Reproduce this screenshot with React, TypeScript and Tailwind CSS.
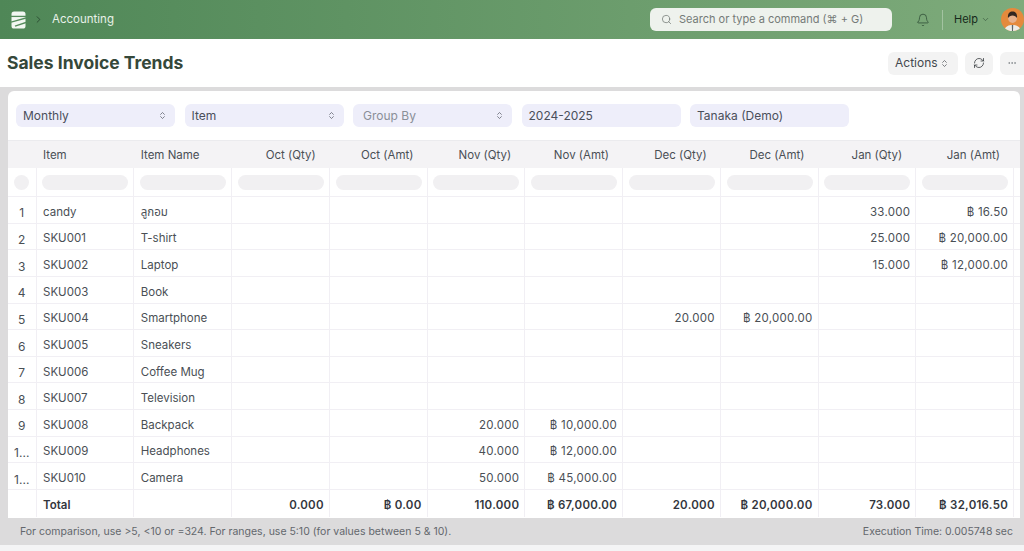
import type { ReactNode } from 'react';
import { Search, Bell, ChevronDown, ChevronRight, ChevronsUpDown, RefreshCw, Ellipsis } from 'lucide-react';

const COLUMNS = ['Oct (Qty)', 'Oct (Amt)', 'Nov (Qty)', 'Nov (Amt)', 'Dec (Qty)', 'Dec (Amt)', 'Jan (Qty)', 'Jan (Amt)'];

const ROWS: { index: string; item: string; name: string; values: Record<number, string> }[] = [
  { index: '1', item: 'candy', name: 'ลูกอม', values: { 6: '33.000', 7: '฿ 16.50' } },
  { index: '2', item: 'SKU001', name: 'T-shirt', values: { 6: '25.000', 7: '฿ 20,000.00' } },
  { index: '3', item: 'SKU002', name: 'Laptop', values: { 6: '15.000', 7: '฿ 12,000.00' } },
  { index: '4', item: 'SKU003', name: 'Book', values: {} },
  { index: '5', item: 'SKU004', name: 'Smartphone', values: { 4: '20.000', 5: '฿ 20,000.00' } },
  { index: '6', item: 'SKU005', name: 'Sneakers', values: {} },
  { index: '7', item: 'SKU006', name: 'Coffee Mug', values: {} },
  { index: '8', item: 'SKU007', name: 'Television', values: {} },
  { index: '9', item: 'SKU008', name: 'Backpack', values: { 2: '20.000', 3: '฿ 10,000.00' } },
  { index: '1...', item: 'SKU009', name: 'Headphones', values: { 2: '40.000', 3: '฿ 12,000.00' } },
  { index: '1...', item: 'SKU010', name: 'Camera', values: { 2: '50.000', 3: '฿ 45,000.00' } },
];

const TOTALS = ['0.000', '฿ 0.00', '110.000', '฿ 67,000.00', '20.000', '฿ 20,000.00', '73.000', '฿ 32,016.50'];

function Logo() {
  return (
    <svg width="15" height="18" viewBox="0 0 15 18" fill="none">
      <rect x="0.5" y="0.5" width="14" height="17" rx="2.6" fill="#f2f7f2" />
      <path d="M0 5.4H15" stroke="#558c5c" strokeWidth="1.3" />
      <path d="M0 11.2L15 7" stroke="#558c5c" strokeWidth="1.4" />
      <path d="M4 15.2L15 11.4" stroke="#558c5c" strokeWidth="1.4" />
    </svg>
  );
}

function Avatar() {
  return (
    <svg width="23" height="23" viewBox="0 0 23 23" className="rounded-full">
      <rect width="23" height="23" fill="#e58a3c" />
      <path d="M3 23C4 18 8 17 11.5 17C15 17 19 18 20 23Z" fill="#ecebe6" />
      <circle cx="11.5" cy="10.5" r="4.4" fill="#e6b08c" />
      <path d="M7 10C6.4 5 9 3.4 11.5 3.4C14 3.4 16.6 5 16 10C15 8.2 13.5 7.4 11.5 7.4C9.5 7.4 8 8.2 7 10Z" fill="#33261f" />
      <path d="M10.8 17H12.2L12 23H11Z" fill="#5d6468" />
    </svg>
  );
}

function SelectField({ label, chevron, muted }: { label: string; chevron?: boolean; muted?: boolean }) {
  return (
    <div className={`flex h-[23px] w-[159px] items-center justify-between rounded-md bg-[#eeeefa] pr-[8px] text-[12px] ${muted ? 'pl-[10px] text-[#8a8f98]' : 'pl-[7px] text-[#4a4f5a]'}`}>
      <span>{label}</span>
      {chevron && <ChevronsUpDown size={9} strokeWidth={1.8} className="text-[#4a4f5a]" />}
    </div>
  );
}

function Cell({ right, bold, children }: { right?: boolean; bold?: boolean; children?: ReactNode }) {
  return (
    <div className={`flex h-full w-[97.75px] shrink-0 items-center border-r border-[#f1eff4] pt-[5px] text-[11.5px] ${right ? 'justify-end px-[5px] tracking-[0.25px]' : 'pl-[6.5px]'} ${bold ? 'font-semibold text-[#33363d]' : 'text-[#4a4f55]'}`}>
      {children}
    </div>
  );
}

export default function App() {
  return (
    <div className="flex h-[551px] w-[1024px] flex-col overflow-hidden bg-[#dcdbdc] font-['Inter','Noto_Sans_Thai','Noto_Sans',sans-serif]">
      {/* Navbar */}
      <header className="flex h-[39px] shrink-0 items-center bg-gradient-to-r from-[#4f8757] to-[#7eab7b] pl-[11px]">
        <Logo />
        <ChevronRight size={11} strokeWidth={1.6} className="ml-[7px] text-[#1f3a26]" />
        <span className="ml-[8px] text-[11.5px] text-[#e8f1e8]">Accounting</span>
        <div className="ml-auto flex h-[23px] w-[242px] items-center rounded-md bg-[#eef2ed] pl-[11px] text-[#6f7672]">
          <Search size={11} strokeWidth={1.6} />
          <span className="ml-[7px] text-[11px] text-[#757b78]">Search or type a command (⌘ + G)</span>
        </div>
        <Bell size={14} strokeWidth={1.3} className="ml-[24px] text-[#2c4a34]" />
        <div className="ml-[12px] h-[20px] w-px bg-[#a3c3a1]" />
        <span className="ml-[11px] text-[11px] text-[#16291b]">Help</span>
        <ChevronDown size={9} strokeWidth={1.5} className="ml-[3px] text-[#2c4a34]" />
        <div className="ml-[11px] flex">
          <Avatar />
        </div>
      </header>

      {/* Page head */}
      <div className="flex h-[48px] shrink-0 items-center justify-between bg-white pl-[7px]">
        <h1 className="pt-[1px] text-[17.5px] font-bold text-[#35483a]">Sales Invoice Trends</h1>
        <div className="flex items-center gap-[7px]">
          <div className="flex h-[23px] w-[70px] items-center justify-between rounded-md bg-[#f3f3f3] pl-[7px] pr-[9px] text-[12px] text-[#44484e]">
            Actions
            <ChevronsUpDown size={9} strokeWidth={1.8} />
          </div>
          <div className="flex h-[23px] w-[28px] items-center justify-center rounded-md bg-[#f3f3f3] text-[#2f3337]">
            <RefreshCw size={12} strokeWidth={1.5} />
          </div>
          <div className="flex h-[23px] w-[24px] items-center justify-center rounded-l-md bg-[#f3f3f3] text-[#70757a]">
            <Ellipsis size={10} strokeWidth={1.6} />
          </div>
        </div>
      </div>

      {/* Report card */}
      <main className="flex flex-1 flex-col pl-[8px] pr-[4px] pt-[4px]">
        <div className="flex h-[427px] flex-col overflow-hidden rounded-t-md bg-white">
          <div className="flex h-[49px] shrink-0 items-center gap-[9.5px] pl-[8px]">
            <SelectField label="Monthly" chevron />
            <SelectField label="Item" chevron />
            <SelectField label="Group By" chevron muted />
            <SelectField label="2024-2025" />
            <SelectField label="Tanaka (Demo)" />
          </div>

          <div className="flex h-[28px] shrink-0 items-center border-t border-[#ebebee] bg-[#f4f3f5] pt-[2px] text-[11.5px] text-[#4a4f55]">
            <div className="w-[28.5px] shrink-0" />
            <div className="w-[97.75px] shrink-0 pl-[6.5px]">Item</div>
            <div className="w-[97.75px] shrink-0 pl-[6.5px]">Item Name</div>
            {COLUMNS.map((c) => (
              <div key={c} className="w-[97.75px] shrink-0 pr-[14px] text-right">{c}</div>
            ))}
          </div>

          <div className="flex h-[29px] shrink-0 items-center border-b border-[#f1eff4]">
            <div className="flex h-full w-[28.5px] shrink-0 items-center justify-center border-r border-[#f1eff4]">
              <div className="h-[15px] w-[15px] rounded-full bg-[#f1f0f2]" />
            </div>
            {Array.from({ length: 10 }, (_, i) => (
              <div key={i} className="flex h-full w-[97.75px] shrink-0 items-center justify-center border-r border-[#f1eff4]">
                <div className="ml-[1px] h-[15px] w-[86px] rounded-full bg-[#f1f0f2]" />
              </div>
            ))}
          </div>

          {ROWS.map((row) => (
            <div key={row.item} className="flex h-[26.65px] shrink-0 items-center border-b border-[#f1eff4]">
              <div className="flex h-full w-[28.5px] shrink-0 items-center justify-center border-r border-[#f1eff4] pt-[7px] text-[12px] text-[#4a4f55]">{row.index}</div>
              <Cell>{row.item}</Cell>
              <Cell>{row.name}</Cell>
              {COLUMNS.map((c, i) => (
                <Cell key={c} right>{row.values[i]}</Cell>
              ))}
            </div>
          ))}

          <div className="flex h-[27px] shrink-0 items-center">
            <div className="h-full w-[28.5px] shrink-0 border-r border-[#f1eff4]" />
            <Cell bold>Total</Cell>
            <Cell />
            {TOTALS.map((t, i) => (
              <Cell key={i} right bold>{t}</Cell>
            ))}
          </div>
        </div>

        <div className="flex h-[27px] shrink-0 items-center justify-between pl-[12px] pr-[7px] text-[10.5px] text-[#63676c]">
          <span>For comparison, use &gt;5, &lt;10 or =324. For ranges, use 5:10 (for values between 5 &amp; 10).</span>
          <span>Execution Time: 0.005748 sec</span>
        </div>
      </main>
      <div className="h-[6px] shrink-0 bg-[#f4f4f5]" />
    </div>
  );
}
